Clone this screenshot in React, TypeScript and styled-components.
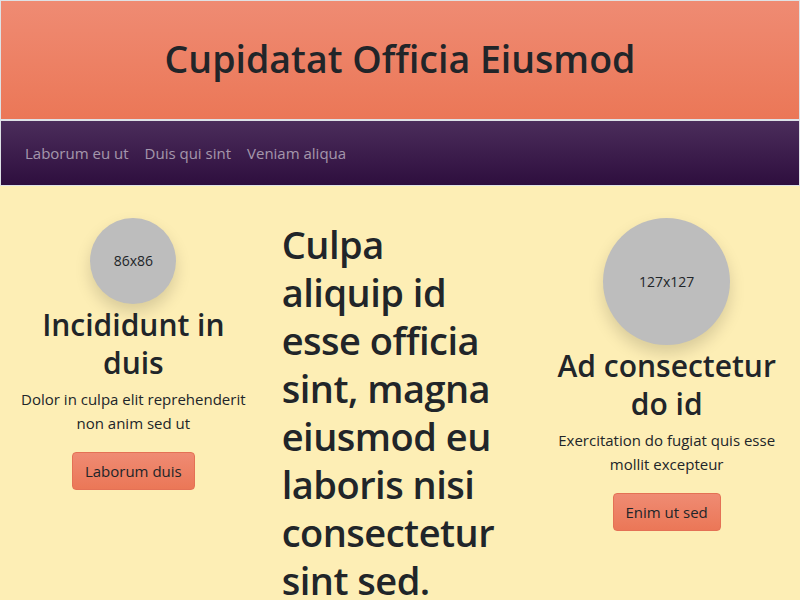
import React from "react";
import styled, { createGlobalStyle } from "styled-components";

const GlobalStyle = createGlobalStyle`
  html, body {
    margin: 0;
    padding: 0;
    background: #fdeeb5;
  }
  body {
    font-family: "Open Sans", "Noto Sans", sans-serif;
    font-size: 15px;
    line-height: 24px;
    color: #212529;
  }
  * { box-sizing: border-box; }
`;

const Header = styled.header`
  border: 1px solid #dee2e6;
  background: linear-gradient(to bottom, #ef8b73, #eb7757);
  padding: 34px 16px 36px;
  text-align: center;
`;

const Title = styled.h1`
  margin: 0;
  font-size: 37.5px;
  line-height: 48px;
  font-weight: 600;
`;

const Nav = styled.nav`
  border: 1px solid #dee2e6;
  background: linear-gradient(to bottom, #4b2d5b, #2e0e3e);
  padding: 12px 16px;
  display: flex;
`;

const NavLink = styled.a`
  display: block;
  padding: 8px;
  color: rgba(255, 255, 255, 0.55);
  text-decoration: none;
  line-height: 24px;
`;

const Main = styled.main`
  padding-top: 32px;
  display: grid;
  grid-template-columns: repeat(3, 1fr);
`;

const Column = styled.section<{ $center?: boolean }>`
  padding: 0 12px;
  display: flex;
  flex-direction: column;
  align-items: ${({ $center }) => ($center ? "center" : "flex-start")};
  text-align: ${({ $center }) => ($center ? "center" : "left")};
`;

const Avatar = styled.div<{ $size: number }>`
  width: ${({ $size }) => $size}px;
  height: ${({ $size }) => $size}px;
  flex-shrink: 0;
  border-radius: 50%;
  background: #bdbdbd;
  box-shadow: 0 8px 16px rgba(0, 0, 0, 0.15);
  display: flex;
  align-items: center;
  justify-content: center;
  font-size: 14px;
`;

const CardTitle = styled.h2`
  margin: 0 0 4px;
  padding-top: 2px;
  font-size: 30px;
  line-height: 38.4px;
  font-weight: 600;
`;

const CardText = styled.p`
  margin: 0 0 17px;
`;

const Button = styled.button`
  font: inherit;
  color: #212529;
  padding: 6px 12px;
  line-height: 24px;
  border: 1px solid #e47155;
  border-radius: 4px;
  background: linear-gradient(to bottom, #ef8b73, #eb7757);
`;

const Lead = styled.h1`
  margin: 0;
  padding: 2px 20px 0 3px;
  font-size: 38px;
  line-height: 48px;
  font-weight: 600;
  letter-spacing: -0.5px;
`;

interface CardProps {
  size: number;
  title: string;
  text: string;
  action: string;
}

const Card = ({ size, title, text, action }: CardProps) => (
  <Column $center>
    <Avatar $size={size}>{size}x{size}</Avatar>
    <CardTitle>{title}</CardTitle>
    <CardText>{text}</CardText>
    <Button>{action}</Button>
  </Column>
);

export default function App() {
  return (
    <>
      <GlobalStyle />
      <Header>
        <Title>Cupidatat Officia Eiusmod</Title>
      </Header>
      <Nav>
        <NavLink href="#">Laborum eu ut</NavLink>
        <NavLink href="#">Duis qui sint</NavLink>
        <NavLink href="#">Veniam aliqua</NavLink>
      </Nav>
      <Main>
        <Card
          size={86}
          title="Incididunt in duis"
          text="Dolor in culpa elit reprehenderit non anim sed ut"
          action="Laborum duis"
        />
        <Column>
          <Lead>Culpa aliquip id esse officia sint, magna eiusmod eu laboris nisi consectetur sint sed.</Lead>
        </Column>
        <Card
          size={127}
          title="Ad consectetur do id"
          text="Exercitation do fugiat quis esse mollit excepteur"
          action="Enim ut sed"
        />
      </Main>
    </>
  );
}
